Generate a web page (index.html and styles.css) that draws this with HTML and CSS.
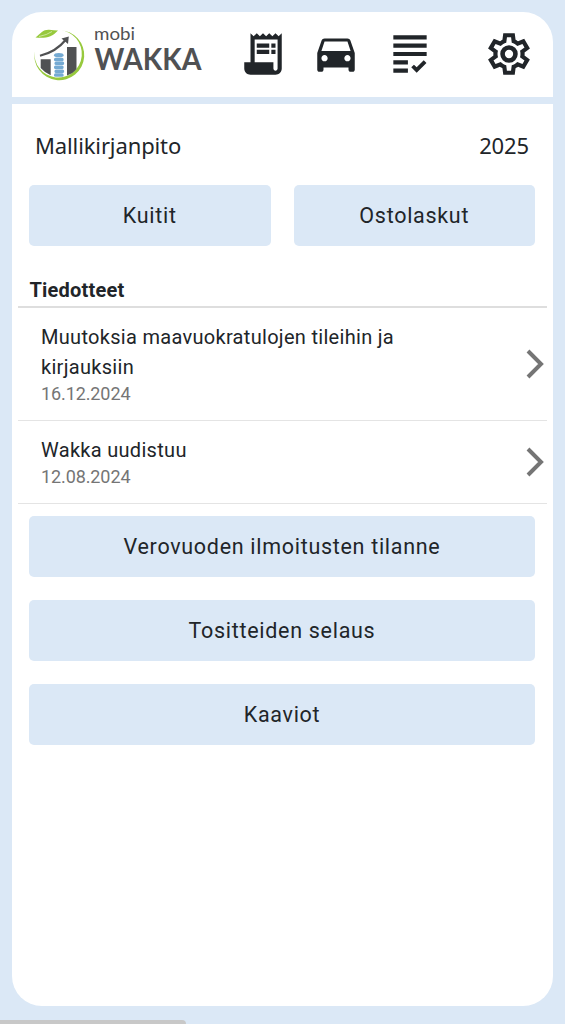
FILE: index.html
```html
<!DOCTYPE html>
<html lang="fi">
<head>
    <meta charset="UTF-8">
    <meta name="viewport" content="width=device-width, initial-scale=1.0">
    <title>mobiWAKKA</title>
    <link rel="stylesheet" href="styles.css">
</head>
<body>
    <div class="app">
        <!-- Header -->
        <header class="header">
            <svg class="logo" viewBox="0 0 172 56" role="img" aria-label="mobi WAKKA">
                <path class="logo-leaf" d="M3.5 10.5C9 6 11 2.5 17 2.7Q22 3.2 26 3.5C20 10 14 11.5 3.5 10.5Z"/>
                <path class="logo-leaf" d="M28 3.2A25 25 0 1 1 2.6 24A23.7 23.7 0 1 0 28 3.2Z"/>
                <path class="logo-vein" d="M7 9.5Q15 8 20 4.5"/>
                <path class="logo-bar" d="M8.7 32.3H18.7V48.3Q13 46 8.7 41ZM35 20H44.5V42Q41 46.5 35 48.5Z"/>
                <g class="logo-coins">
                    <ellipse cx="26.8" cy="28.2" rx="4.8" ry="2.1"/>
                    <rect x="22" y="30.7" width="9.6" height="3.5" rx="1.5"/>
                    <rect x="22.5" y="34.6" width="9.6" height="3.5" rx="1.5"/>
                    <rect x="22" y="38.5" width="9.6" height="3.5" rx="1.5"/>
                    <rect x="22.5" y="42.4" width="9.6" height="3.5" rx="1.5"/>
                    <rect x="22" y="46.3" width="9.6" height="3.5" rx="1.5"/>
                </g>
                <path class="logo-arrow" d="M8 28.7Q24 25 34 12.5"/>
                <path class="logo-bar" d="M29.5 11.6L36.8 9.5L36 17Z"/>
                <text class="logo-mobi" x="62" y="12.8" textLength="41" lengthAdjust="spacingAndGlyphs">mobi</text>
                <text class="logo-wakka" x="62.5" y="43" textLength="107" lengthAdjust="spacingAndGlyphs">WAKKA</text>
            </svg>
            <nav class="nav">
                <svg class="icon" viewBox="0 0 24 24"><path d="M19.5 3.5 18 2l-1.5 1.5L15 2l-1.5 1.5L12 2l-1.5 1.5L9 2 7.5 3.5 6 2v14H3v3c0 1.66 1.34 3 3 3h12c1.66 0 3-1.34 3-3V2l-1.5 1.5zM19 19c0 .55-.45 1-1 1s-1-.45-1-1v-3H8V5h11v14z"/><path d="M9 7h6v2H9zm7 0h2v2h-2zm-7 3h6v2H9zm7 0h2v2h-2z"/></svg>
                <svg class="icon icon-car" viewBox="0 0 24 24"><path d="M18.92 6.01C18.72 5.42 18.16 5 17.5 5h-11c-.66 0-1.21.42-1.42 1.01L3 12v8c0 .55.45 1 1 1h1c.55 0 1-.45 1-1v-1h12v1c0 .55.45 1 1 1h1c.55 0 1-.45 1-1v-8l-2.08-5.99zM6.5 16c-.83 0-1.5-.67-1.5-1.5S5.67 13 6.5 13s1.5.67 1.5 1.5S7.33 16 6.5 16zm11 0c-.83 0-1.5-.67-1.5-1.5s.67-1.5 1.5-1.5 1.5.67 1.5 1.5-.67 1.5-1.5 1.5zM5 11l1.5-4.5h11L19 11H5z"/></svg>
                <svg class="icon" viewBox="0 0 24 24"><path d="M4 3h16v2H4zM4 7h16v2H4zM4 11h16v2H4zM4 15h7v2H4zM4 19h7v2H4z"/><path d="M18.6 15 15.2 18.4 13.9 17.1 12.6 18.4 15.2 21 19.9 16.3z"/></svg>
                <svg class="icon icon-settings" viewBox="0 -960 960 960"><path d="m370-80-16-128q-13-5-24.5-12T307-235l-119 50L78-375l103-78q-1-7-1-13.5v-27q0-6.5 1-13.5L78-585l110-190 119 50q11-8 23-15t24-12l16-128h220l16 128q13 5 24.5 12t22.5 15l119-50 110 190-103 78q1 7 1 13.5v27q0 6.5-2 13.5l103 78-110 190-118-50q-11 8-23 15t-24 12L590-80H370Zm70-80h79l14-106q31-8 57.5-23.5T639-327l99 41 39-68-86-65q5-14 7-29.5t2-31.5q0-16-2-31.5t-7-29.5l86-65-39-68-99 42q-22-23-48.5-38.5T533-694l-13-106h-79l-14 106q-31 8-57.5 23.5T321-633l-99-41-39 68 86 64q-5 15-7 30t-2 32q0 16 2 31t7 30l-86 65 39 68 99-42q22 23 48.5 38.5T427-266l13 106Z"/><circle class="icon-ring" cx="480" cy="-480" r="124"/></svg>
            </nav>
        </header>

        <!-- Content -->
        <main class="content">
            <div class="account">
                <span class="account-name">Mallikirjanpito</span>
                <span class="account-year">2025</span>
            </div>
            <div class="button-row">
                <button class="button">Kuitit</button>
                <button class="button">Ostolaskut</button>
            </div>

            <section class="news">
                <h2>Tiedotteet</h2>
                <div class="news-item">
                    <div class="news-text">
                        <div class="news-title">Muutoksia maavuokratulojen tileihin ja kirjauksiin</div>
                        <div class="news-date">16.12.2024</div>
                    </div>
                    <svg class="chevron" viewBox="0 0 18 30"><path d="M2 2L15 15L2 28"/></svg>
                </div>
                <div class="news-item">
                    <div class="news-text">
                        <div class="news-title">Wakka uudistuu</div>
                        <div class="news-date">12.08.2024</div>
                    </div>
                    <svg class="chevron" viewBox="0 0 18 30"><path d="M2 2L15 15L2 28"/></svg>
                </div>
            </section>

            <div class="button-list">
                <button class="button">Verovuoden ilmoitusten tilanne</button>
                <button class="button">Tositteiden selaus</button>
                <button class="button">Kaaviot</button>
            </div>
        </main>
    </div>
    <div class="status-bar"></div>
</body>
</html>
```
FILE: styles.css
```css
* {
    box-sizing: border-box;
}
body {
    margin: 0;
    height: 1024px;
    padding: 11.5px 12.5px 0 11.5px;
    overflow: hidden;
    position: relative;
    font-family: Roboto, sans-serif;
    color: #212529;
    background-color: #dbe8f6;
}
.app {
    height: 994.5px;
    border-radius: 30px;
    overflow: hidden;
    background-color: #fff;
}
.header {
    display: flex;
    align-items: flex-start;
    height: 92.5px;
    padding: 15.5px 18.5px 0 20.5px;
    border-bottom: 7px solid #dbe8f6;
}
.logo {
    width: 172px;
    height: 56px;
    flex: none;
    overflow: visible;
}
.logo-leaf {
    fill: #97c93d;
}
.logo-vein {
    fill: none;
    stroke: #d9edb5;
    stroke-width: 0.8;
}
.logo-bar {
    fill: #505153;
}
.logo-coins {
    fill: #75aad3;
}
.logo-arrow {
    fill: none;
    stroke: #505153;
    stroke-width: 2.2;
}
.logo-mobi {
    font: 17px Lato, sans-serif;
    fill: #505153;
}
.logo-wakka {
    font: 700 31px Lato, sans-serif;
    fill: #505153;
}
.nav {
    display: flex;
    flex: 1;
    gap: 23.5px;
    padding: 2px 0 0 33.5px;
}
.icon {
    width: 50px;
    height: 50px;
    flex: none;
    fill: #212529;
}
.icon-car {
    margin-top: -1.5px;
}
.icon-settings {
    margin-left: auto;
}
.icon-ring {
    fill: none;
    stroke: #212529;
    stroke-width: 88;
}
.content {
    padding: 23px 6px 0;
}
.account {
    display: flex;
    justify-content: space-between;
    height: 58px;
    padding: 0 17.5px;
    font: 22px/36px "Noto Sans", sans-serif;
    letter-spacing: -0.12px;
}
.button-row {
    display: grid;
    grid-template-columns: 1fr 1fr;
    gap: 23px;
    padding: 0 11.5px;
}
.button {
    height: 61px;
    border: none;
    border-radius: 5px;
    background-color: #dbe8f6;
    color: #212529;
    font-family: inherit;
    font-size: 21.5px;
    letter-spacing: 0.7px;
    padding: 0;
}
.news h2 {
    margin: 28px 0 0;
    padding: 0 12px;
    height: 34px;
    border-bottom: 2px solid #dedede;
    font-size: 20px;
    line-height: 32px;
    font-weight: 700;
    letter-spacing: 0.2px;
}
.news-item {
    display: flex;
    align-items: center;
    justify-content: space-between;
    padding: 13.5px 2.5px 14.5px 23.5px;
    border-bottom: 1px solid #e4e4e4;
}
.news-text {
    width: 400px;
}
.news-title {
    font-size: 20px;
    line-height: 30px;
    letter-spacing: 0.3px;
}
.news-date {
    font-size: 18px;
    line-height: 24px;
    letter-spacing: -0.1px;
    color: #757575;
}
.chevron {
    width: 18px;
    height: 30px;
    fill: none;
    stroke: #757575;
    stroke-width: 4;
}
.button-list {
    display: flex;
    flex-direction: column;
    gap: 23px;
    padding: 12px 11.5px 0;
}
/* link preview strip in the bottom corner */
.status-bar {
    position: absolute;
    left: 0;
    bottom: 0;
    width: 186px;
    height: 4px;
    border-top-right-radius: 4px;
    background-color: #c8c8c8;
}
```
